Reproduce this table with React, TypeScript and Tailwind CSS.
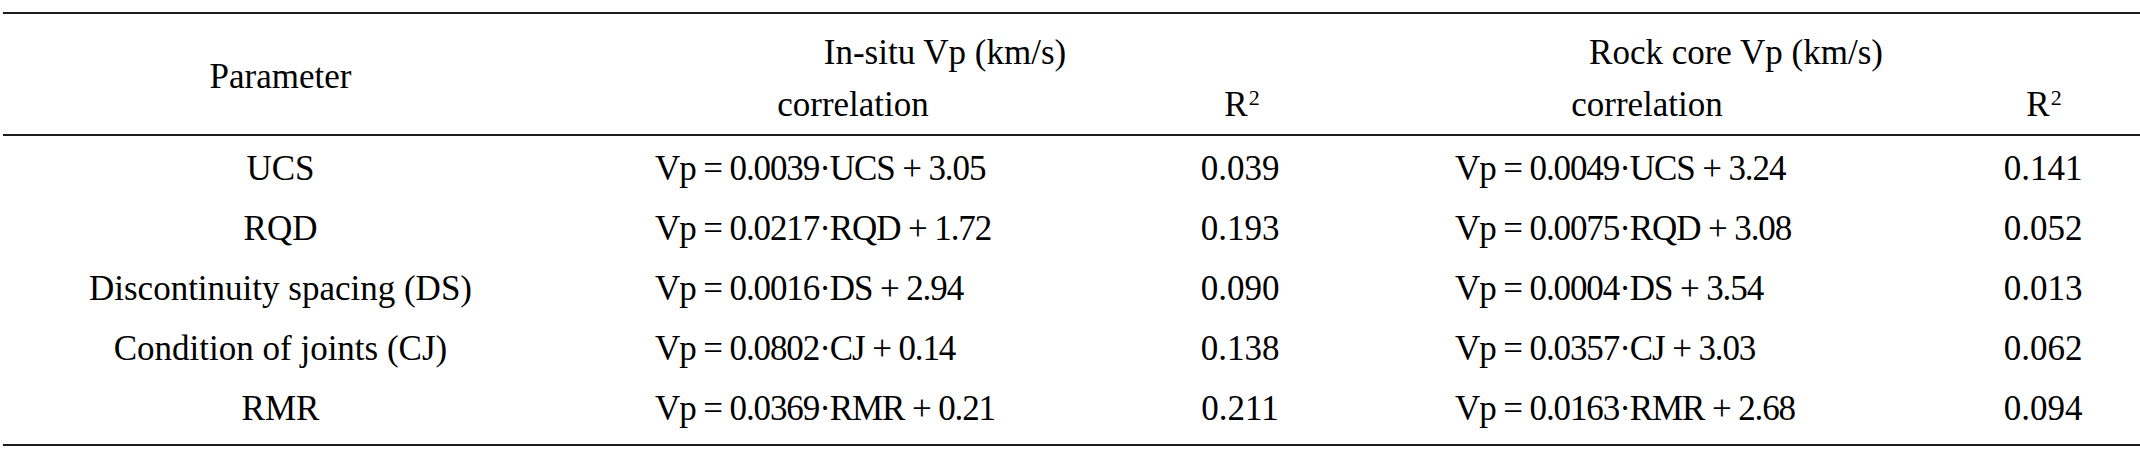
import React from "react"

interface Row {
  param: string
  insitu: string
  insituR2: string
  core: string
  coreR2: string
}

const rows: Row[] = [
  { param: "UCS", insitu: "Vp = 0.0039·UCS + 3.05", insituR2: "0.039", core: "Vp = 0.0049·UCS + 3.24", coreR2: "0.141" },
  { param: "RQD", insitu: "Vp = 0.0217·RQD + 1.72", insituR2: "0.193", core: "Vp = 0.0075·RQD + 3.08", coreR2: "0.052" },
  { param: "Discontinuity spacing (DS)", insitu: "Vp = 0.0016·DS + 2.94", insituR2: "0.090", core: "Vp = 0.0004·DS + 3.54", coreR2: "0.013" },
  { param: "Condition of joints (CJ)", insitu: "Vp = 0.0802·CJ + 0.14", insituR2: "0.138", core: "Vp = 0.0357·CJ + 3.03", coreR2: "0.062" },
  { param: "RMR", insitu: "Vp = 0.0369·RMR + 0.21", insituR2: "0.211", core: "Vp = 0.0163·RMR + 2.68", coreR2: "0.094" },
]

const cols = "grid grid-cols-[555px_590px_184px_630px_178px]"

function R2() {
  return (
    <span>
      R<sup className="text-[22px] relative -top-[11px] ml-[1px]">2</sup>
    </span>
  )
}

export default function App() {
  return (
    <div
      className="w-[2140px] h-[457px] bg-white text-black pl-[3px] pt-[12px] text-[35px] leading-[40px]"
      style={{ fontFamily: '"Liberation Serif", "Times New Roman", serif' }}
    >
      {/* header */}
      <div className={`${cols} grid-rows-[71px_49px] border-t-2 border-b-2 border-[#1c1c1c]`}>
        <div className="row-span-2 flex items-center justify-center pt-[6px]">Parameter</div>
        <div className="col-span-2 flex items-center justify-center pt-[7px]">In-situ Vp (km/s)</div>
        <div className="col-span-2 flex items-center justify-center pt-[7px]">Rock core Vp (km/s)</div>
        <div className="flex items-start justify-center">correlation</div>
        <div className="flex items-start justify-center pl-[4px]"><R2 /></div>
        <div className="flex items-start justify-center">correlation</div>
        <div className="flex items-start justify-center pr-[14px]"><R2 /></div>
      </div>

      {/* body */}
      <div className="pt-[3px] pb-[5px] border-b-2 border-[#1c1c1c]">
        {rows.map((r) => (
          <div key={r.param} className={`${cols} h-[60px] items-center`}>
            <div className="text-center">{r.param}</div>
            <div className="pl-[97px] whitespace-nowrap tracking-[-1.1px]">{r.insitu}</div>
            <div className="text-center">{r.insituR2}</div>
            <div className="pl-[123px] whitespace-nowrap tracking-[-1.1px]">{r.core}</div>
            <div className="text-center pr-[16px]">{r.coreR2}</div>
          </div>
        ))}
      </div>
    </div>
  )
}
